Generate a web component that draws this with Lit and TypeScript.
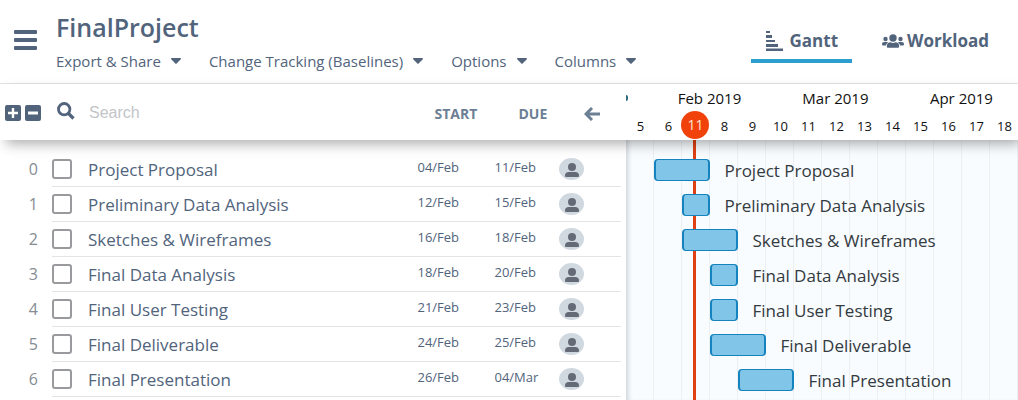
import { LitElement, html, css } from "lit";
import { customElement, state } from "lit/decorators.js";

interface Task {
  name: string;
  start: string;
  due: string;
  week: number;
  weeks: number;
}

const WEEK_WIDTH = 28;
const FIRST_WEEK = 5;

const TASKS: Task[] = [
  { name: "Project Proposal", start: "04/Feb", due: "11/Feb", week: 6, weeks: 2 },
  { name: "Preliminary Data Analysis", start: "12/Feb", due: "15/Feb", week: 7, weeks: 1 },
  { name: "Sketches & Wireframes", start: "16/Feb", due: "18/Feb", week: 7, weeks: 2 },
  { name: "Final Data Analysis", start: "18/Feb", due: "20/Feb", week: 8, weeks: 1 },
  { name: "Final User Testing", start: "21/Feb", due: "23/Feb", week: 8, weeks: 1 },
  { name: "Final Deliverable", start: "24/Feb", due: "25/Feb", week: 8, weeks: 2 },
  { name: "Final Presentation", start: "26/Feb", due: "04/Mar", week: 9, weeks: 2 },
];

const MENUS = ["Export & Share", "Change Tracking (Baselines)", "Options", "Columns"];
const MONTHS = ["Feb 2019", "Mar 2019", "Apr 2019"];
const WEEKS = Array.from({ length: 14 }, (_, i) => FIRST_WEEK + i);
const CURRENT_WEEK = 7;
const TODAY = "11";

const shared = css`
  :host {
    display: block;
    box-sizing: border-box;
    font-family: "Open Sans", "Noto Sans", sans-serif;
    color: #51647c;
  }
  * {
    box-sizing: border-box;
  }
  button {
    margin: 0;
    padding: 0;
    border: 0;
    background: none;
    color: inherit;
    font: inherit;
    cursor: pointer;
  }
  svg {
    display: block;
    fill: currentColor;
  }
`;

@customElement("project-header")
class ProjectHeader extends LitElement {
  @state() private view = "Gantt";

  static styles = [
    shared,
    css`
      .header {
        display: flex;
        align-items: center;
        height: 84px;
        padding: 0 15px 4px 14px;
        border-bottom: 1px solid #e2e3e5;
        background: #fff;
      }
      .burger {
        margin-right: 19px;
      }
      .titles {
        flex: 1;
        padding-top: 2px;
      }
      .title {
        margin: 0;
        font-size: 25px;
        line-height: 36px;
        font-weight: 600;
      }
      .menus {
        display: flex;
        gap: 28px;
        padding-top: 4px;
      }
      .menu {
        display: flex;
        align-items: center;
        gap: 10px;
        font-size: 15px;
        line-height: 24px;
        white-space: nowrap;
      }
      .tabs {
        display: flex;
        gap: 16px;
        padding-top: 10px;
      }
      .tab {
        display: flex;
        align-items: center;
        height: 37px;
        padding: 0 14px 4px;
        border-bottom: 4px solid transparent;
        font-size: 17px;
        line-height: 24px;
        font-weight: 700;
      }
      .tab.active {
        border-bottom-color: #2c9fd0;
      }
      .gantt-icon {
        margin-right: 7px;
      }
      .people-icon {
        margin-right: 3px;
      }
    `,
  ];

  private icon(name: string) {
    return name === "Gantt"
      ? html`<svg class="gantt-icon" width="18" height="20" viewBox="0 0 18 20" aria-hidden="true">
          <path d="M1 0h4v2H1zM1 4h6v3H1zM1 9h9v2H1zM1 13h12v3H1zM1 17.500h17v2.500H1z" />
        </svg>`
      : html`<svg class="people-icon" width="22" height="14" viewBox="0 0 22 14" aria-hidden="true">
          <circle cx="11" cy="4" r="3.700" />
          <circle cx="3.500" cy="5" r="2.200" />
          <circle cx="18.500" cy="5" r="2.200" />
          <path
            d="M4.800 12.200c0-2.400 1.600-4 3.700-4 1.600 1 3.400 1 5 0 2.100 0 3.700 1.600 3.700 4 0 1-.6 1.600-1.600 1.600H6.400c-1 0-1.600-.6-1.600-1.600zM0 10.200C0 8.800.9 7.900 2.200 7.900h2.600c.6 0 1.100.2 1.500.5-1.300.8-2.100 1.700-2.300 3H.8c-.5 0-.8-.3-.8-.8zM22 10.200c0-1.400-.9-2.300-2.200-2.300h-2.600c-.6 0-1.100.2-1.500.5 1.300.8 2.100 1.700 2.300 3h3.200c.5 0 .8-.3.8-.8z"
          />
        </svg>`;
  }

  render() {
    return html`
      <header class="header">
        <button class="burger" aria-label="Main menu">
          <svg width="23" height="20" viewBox="0 0 23 20">
            <rect y="0" width="23" height="4" rx="1" />
            <rect y="8" width="23" height="4" rx="1" />
            <rect y="16" width="23" height="4" rx="1" />
          </svg>
        </button>
        <div class="titles">
          <h1 class="title">FinalProject</h1>
          <nav class="menus">
            ${MENUS.map(
              (label) => html`<button class="menu" aria-haspopup="menu">
                ${label}
                <svg width="10" height="6" viewBox="0 0 10 6" aria-hidden="true">
                  <path d="M.8 0h8.400c.8 0 1.100.8.6 1.300L5.600 5.600c-.4.4-.8.4-1.200 0L.2 1.300C-.3.800 0 0 .8 0z" />
                </svg>
              </button>`
            )}
          </nav>
        </div>
        <nav class="tabs">
          ${["Gantt", "Workload"].map(
            (name) => html`<button
              class="tab ${this.view === name ? "active" : ""}"
              aria-pressed=${this.view === name}
              @click=${() => (this.view = name)}
            >
              ${this.icon(name)}${name}
            </button>`
          )}
        </nav>
      </header>
    `;
  }
}

@customElement("task-list")
class TaskList extends LitElement {
  static styles = [
    shared,
    css`
      table,
      thead,
      tbody {
        display: block;
      }
      th,
      td {
        padding: 0;
        text-align: left;
      }
      thead {
        position: relative;
        z-index: 2;
      }
      .head,
      .row {
        display: grid;
        align-items: center;
        margin-right: 5px;
      }
      .head {
        grid-template-columns: 53px minmax(0, 1fr) 84px 66px 37px;
        height: 56px;
      }
      .row {
        grid-template-columns: 52px minmax(0, 1fr) 77px 65px 62px;
        height: 35px;
      }
      .head th {
        padding-top: 4px;
      }
      .head .tools {
        display: flex;
        gap: 4px;
        padding: 1px 0 0 5px;
      }
      .head .search {
        display: flex;
        align-items: center;
        gap: 14px;
        padding: 0 0 2px 4px;
      }
      .search input {
        flex: 1;
        min-width: 0;
        padding: 4px 0 0;
        border: 0;
        outline: 0;
        background: none;
        color: inherit;
        font: 16px/24px "Liberation Sans", Arial, sans-serif;
      }
      .search input::placeholder {
        color: #c3c5c8;
        opacity: 1;
      }
      .label {
        color: #6c8095;
        font-size: 14px;
        line-height: 20px;
        font-weight: 700;
      }
      .collapse {
        color: #6c8095;
      }
      .collapse button {
        display: block;
      }
      .collapse svg {
        fill: none;
        stroke: currentColor;
        stroke-width: 3;
      }
      tbody {
        padding-top: 12px;
      }
      .row td {
        display: flex;
        align-items: center;
        height: 35px;
        border-bottom: 1px solid #e3e4e6;
      }
      .row .number {
        justify-content: flex-end;
        padding-right: 14px;
        border-bottom-color: transparent;
        color: #868c92;
        font-size: 16px;
      }
      .row .name {
        font-size: 17px;
        white-space: nowrap;
      }
      .name label {
        display: flex;
        align-items: center;
        gap: 16px;
      }
      .name input {
        appearance: none;
        width: 20px;
        height: 20px;
        margin: 0;
        border: 2px solid #999a9d;
        border-radius: 3px;
        background: #fff;
      }
      .name input:checked {
        background: #2c9fd0;
      }
      .row .date {
        padding-bottom: 4px;
        font-size: 13px;
      }
      .avatar {
        display: flex;
        align-items: flex-end;
        justify-content: center;
        width: 25px;
        height: 22px;
        padding-bottom: 3px;
        border-radius: 50%;
        background: #d0d8e0;
        color: #646b76;
      }
      .row .owner {
        padding-bottom: 1px;
      }
    `,
  ];

  render() {
    return html`
      <table>
        <thead>
          <tr class="head">
            <th class="tools">
              <button aria-label="Expand all">
                <svg width="16" height="16" viewBox="0 0 16 16">
                  <path
                    fill-rule="evenodd"
                    d="M2 0h12a2 2 0 0 1 2 2v12a2 2 0 0 1-2 2H2a2 2 0 0 1-2-2V2a2 2 0 0 1 2-2zM6.800 3v3.800H3v2.400h3.800V13h2.400V9.200H13V6.800H9.200V3z"
                  />
                </svg>
              </button>
              <button aria-label="Collapse all">
                <svg width="16" height="16" viewBox="0 0 16 16">
                  <path
                    fill-rule="evenodd"
                    d="M2 0h12a2 2 0 0 1 2 2v12a2 2 0 0 1-2 2H2a2 2 0 0 1-2-2V2a2 2 0 0 1 2-2zM3 6.500v3h10v-3z"
                  />
                </svg>
              </button>
            </th>
            <th class="search">
              <svg width="18" height="18" viewBox="0 0 18 18" aria-hidden="true">
                <circle cx="7.200" cy="7.200" r="5.700" fill="none" stroke="currentColor" stroke-width="2.800" />
                <path d="M11 11l5.500 5.500" stroke="currentColor" stroke-width="3.200" />
              </svg>
              <input type="text" placeholder="Search" aria-label="Search" />
            </th>
            <th class="label">START</th>
            <th class="label">DUE</th>
            <th class="collapse">
              <button aria-label="Hide list columns">
                <svg width="16" height="14" viewBox="0 0 16 14"><path d="M8 1L2 7l6 6M2 7h14" /></svg>
              </button>
            </th>
          </tr>
        </thead>
        <tbody>
          ${TASKS.map(
            (task, i) => html`<tr class="row">
              <td class="number">${i}</td>
              <td class="name">
                <label><input type="checkbox" />${task.name}</label>
              </td>
              <td class="date">${task.start}</td>
              <td class="date">${task.due}</td>
              <td class="owner">
                <span class="avatar">
                  <svg width="14" height="14" viewBox="0 0 14 14" aria-hidden="true">
                    <circle cx="7" cy="4" r="4" />
                    <path d="M0 12.500C0 10.200 1.500 9 3.500 9h7c2 0 3.500 1.200 3.500 3.500 0 1-.5 1.500-1.200 1.500H1.200C.5 14 0 13.500 0 12.500z" />
                  </svg>
                </span>
              </td>
            </tr>`
          )}
        </tbody>
      </table>
    `;
  }
}

@customElement("gantt-chart")
class GanttChart extends LitElement {
  static styles = [
    shared,
    css`
      :host {
        display: flex;
        flex-direction: column;
        overflow: hidden;
        color: #111;
      }
      .scale {
        position: relative;
        z-index: 2;
        height: 56px;
      }
      .months {
        display: flex;
        font-size: 15px;
        line-height: 28px;
      }
      .edge {
        flex: none;
        width: 20px;
      }
      .edge::before {
        content: "";
        display: block;
        width: 2px;
        height: 6px;
        margin-top: 11px;
        border-radius: 0 2px 2px 0;
        background: #2b6a80;
      }
      .month {
        flex: none;
        width: 126px;
        text-align: center;
      }
      .weeks {
        display: flex;
        font-size: 13px;
        line-height: 28px;
      }
      .week {
        flex: none;
        width: 28px;
        text-align: center;
      }
      .today {
        position: absolute;
        top: 27px;
        left: 55px;
        width: 28px;
        height: 28px;
        border-radius: 50%;
        background: #f2420c;
        color: #fde3d6;
        font-size: 14px;
        line-height: 28px;
        text-align: center;
      }
      .chart {
        position: relative;
        flex: 1;
        padding-top: 12px;
        background: repeating-linear-gradient(to right, transparent 0 27px, #edf0f3 27px 28px) #f8fcff;
        box-shadow: inset 5px 0 5px -3px #cdd3d9;
      }
      .now {
        position: absolute;
        top: 0;
        bottom: 0;
        left: 67px;
        width: 3px;
        background: #df4113;
      }
      .lane {
        position: relative;
        display: flex;
        align-items: center;
        gap: 14px;
        height: 35px;
        color: #333a40;
        font-size: 17px;
        white-space: nowrap;
      }
      .bar {
        flex: none;
        height: 22px;
        border: solid #1583bd;
        border-width: 1px 2px;
        border-radius: 4px;
        background: #81c5e8;
      }
      .caption {
        padding-top: 2px;
      }
    `,
  ];

  render() {
    return html`
      <div class="scale">
        <div class="months">
          <span class="edge"></span>
          ${MONTHS.map((m) => html`<span class="month">${m}</span>`)}
        </div>
        <div class="weeks">
          ${WEEKS.map((w) => html`<span class="week">${w === CURRENT_WEEK ? "" : w}</span>`)}
        </div>
        <span class="today">${TODAY}</span>
      </div>
      <div class="chart">
        <div class="now"></div>
        ${TASKS.map(
          (t) => html`<div class="lane" style="padding-left:${(t.week - FIRST_WEEK) * WEEK_WIDTH}px">
            <span class="bar" style="width:${t.weeks * WEEK_WIDTH}px"></span>
            <span class="caption">${t.name}</span>
          </div>`
        )}
      </div>
    `;
  }
}

@customElement("app-root")
class AppRoot extends LitElement {
  static styles = [
    shared,
    css`
      :host {
        display: flex;
        flex-direction: column;
        min-height: 100vh;
        overflow: hidden;
        background: #fff;
      }
      .board {
        position: relative;
        flex: 1;
        display: grid;
        grid-template-columns: minmax(520px, 8fr) minmax(320px, 5fr);
      }
      .board::before {
        content: "";
        position: absolute;
        z-index: 1;
        top: 0;
        left: 0;
        right: 0;
        height: 56px;
        background: #fff;
        box-shadow: 4px 6px 12px -2px rgba(0, 0, 0, 0.32);
      }
    `,
  ];

  render() {
    return html`
      <project-header></project-header>
      <main class="board">
        <task-list></task-list>
        <gantt-chart></gantt-chart>
      </main>
    `;
  }
}
